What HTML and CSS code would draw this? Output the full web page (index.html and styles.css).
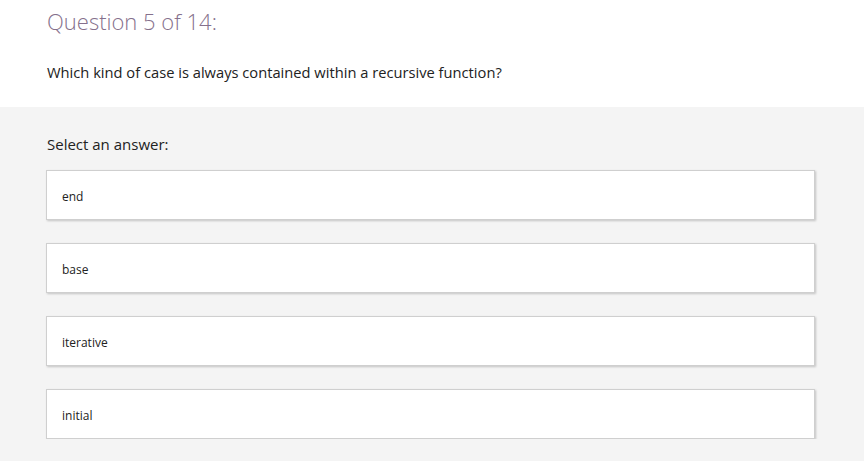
FILE: index.html
```html
<!DOCTYPE html>
<html lang="en">
<head>
    <meta charset="UTF-8">
    <meta name="viewport" content="width=device-width, initial-scale=1.0">
    <title>Quiz</title>
    <link rel="stylesheet" href="styles.css">
</head>
<body>
    <header class="question-header">
        <h1 class="question-count">Question 5 of 14:</h1>
        <p class="question-text">Which kind of case is always contained within a recursive function?</p>
    </header>

    <main class="answers">
        <p class="answers-label">Select an answer:</p>
        <div class="answer">end</div>
        <div class="answer">base</div>
        <div class="answer">iterative</div>
        <div class="answer">initial</div>
    </main>
</body>
</html>
```

FILE: styles.css
```css
body {
    font-family: "Open Sans", "Segoe UI", sans-serif;
    margin: 0;
    color: #222;
    background-color: #f4f4f4;
}
.question-header {
    background-color: #fff;
    padding: 6px 47px 0;
    height: 101px;
}
.question-count {
    font-size: 22px;
    font-weight: 300;
    color: #85708c;
    margin: 0;
    line-height: 30px;
}
.question-text {
    font-size: 14.7px;
    margin: 26px 0 0;
    line-height: 20px;
}
.answers {
    padding: 26px 49px 0 46px;
}
.answers-label {
    font-size: 15px;
    margin: 0 0 15px 1px;
    line-height: 22px;
}
.answer {
    background-color: #fff;
    border: 1px solid #cfcfcf;
    box-shadow: 1px 1px 2px rgba(0, 0, 0, 0.2);
    height: 48px;
    line-height: 51px;
    padding: 0 15px;
    font-size: 12px;
    margin-bottom: 23px;
}
.answer:last-child {
    margin-bottom: 0;
}
```
